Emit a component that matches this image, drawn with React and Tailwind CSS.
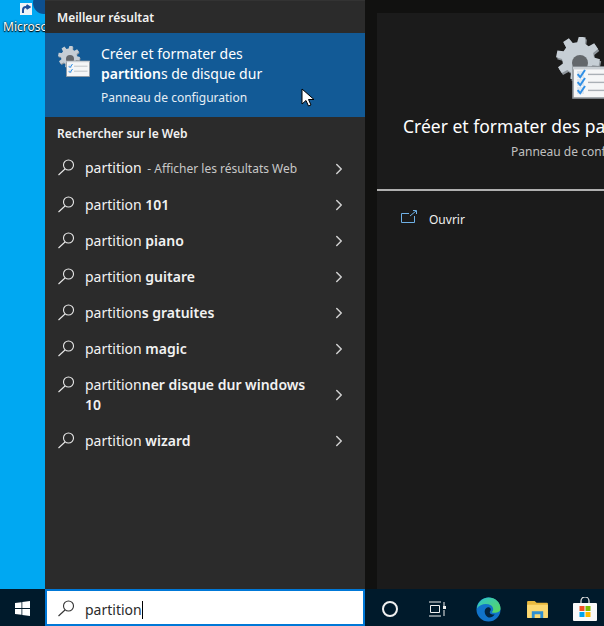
import { ChevronRight } from 'lucide-react'

const font = { fontFamily: '"Noto Sans", sans-serif' }

// 8 tooth gear outline, coordinates in the icon's 32x32 box
function gearPath(cx, cy, outer, inner) {
  const pts = []
  for (let i = 0; i < 8; i++) {
    const a = (i * Math.PI) / 4 + 0.2
    const step = Math.PI / 4
    const at = (r, t) => `${(cx + r * Math.cos(t)).toFixed(2)} ${(cy + r * Math.sin(t)).toFixed(2)}`
    pts.push(at(inner, a - step * 0.32), at(outer, a - step * 0.2), at(outer, a + step * 0.2), at(inner, a + step * 0.32))
  }
  return `M${pts.join('L')}Z`
}

function SearchIcon({ className = 'text-[#e8e8e8]' }) {
  return (
    <svg width="19" height="19" viewBox="0 0 19 19" fill="none" stroke="currentColor" strokeWidth="1.1" className={className}>
      <circle cx="11.5" cy="7" r="5" />
      <path d="M8 11 L1.5 17" />
    </svg>
  )
}

function Check({ y }) {
  return (
    <g>
      <rect x="10.500" y={y} width="3.500" height="3.500" fill="#dfe6ee" />
      <path d={`M10.800 ${y + 1.6}l1.300 1.500 2.400-3.600`} fill="none" stroke="#2f8fe6" strokeWidth="1" />
      <path d={`M16 ${y + 1.7}h13.500`} stroke="#aab0b6" strokeWidth="0.7" />
    </g>
  )
}

function GearIcon({ size, rows }) {
  const ys = rows === 3 ? [17, 21, 25] : [18.5, 23.5]
  return (
    <svg width={size} height={size} viewBox="0 0 32 32">
      <path d={gearPath(11.6, 11.6, 11, 8)} fill="#8e959b" />
      <path d={gearPath(11, 10.6, 11, 8)} fill="#c6ced5" />
      <circle cx="12" cy="13" r="4" fill="#63676b" />
      <rect x="8.500" y="15" width="23" height="15.500" fill="#f5f6f7" stroke="#90969c" strokeWidth="0.8" />
      <rect x="8.500" y="15" width="23" height="1.200" fill="#c9ced3" />
      {ys.map((y) => (
        <Check key={y} y={y} />
      ))}
    </svg>
  )
}

function WebRow({ children }) {
  return (
    <div className="flex items-center pl-[12px] pr-[17px] py-[8px]">
      <div className="w-[28px] shrink-0 self-start">
        <SearchIcon />
      </div>
      <div className="flex-1 text-[14px] leading-[20px] text-[#f2f2f2]">
        <div className="max-w-[226px]">{children}</div>
      </div>
      <ChevronRight size={18} strokeWidth={2} className="text-[#d0d0d0] shrink-0" />
    </div>
  )
}

function TaskIcons() {
  return (
    <div className="flex items-center flex-1 h-full pt-[3px]">
      <div className="w-[49px] flex justify-center">
        <div className="w-[16px] h-[16px] rounded-full border-2 border-[#f0f0f0]" />
      </div>
      <div className="w-[45px] flex justify-center">
        <svg width="18" height="16" viewBox="0 0 18 16" fill="none" stroke="#f0f0f0" strokeWidth="1">
          <path d="M1 1h12M1 15h12M2.500 4.500h9v7h-9zM16 1v4M16 9v6" />
          <rect x="15" y="5" width="3" height="3" fill="#f0f0f0" stroke="none" />
        </svg>
      </div>
      <div className="w-[58px] flex justify-center">
        <svg width="25" height="25" viewBox="0 0 26 26">
          <defs>
            <linearGradient id="edgeA" x1="0" y1="0" x2="1" y2="1">
              <stop offset="0" stopColor="#2ec4d0" />
              <stop offset="1" stopColor="#5ad85a" />
            </linearGradient>
          </defs>
          <circle cx="13" cy="13" r="12.500" fill="#1173c9" />
          <path d="M1 12C2 4 8 .5 13 .5c7 0 12.500 5 12.500 11.500 0 3-3 4.500-6 4.500-2 0-3-.5-3-1 2-1 2-5-1-7C11 6 4 7 1 12z" fill="url(#edgeA)" />
          <path d="M9 15c0-3 3-5 5-4 2 1 1.500 3 .5 4-1 2 2 4 5 3-2 3-5 4-7 3-2-1-3.500-3.500-3.500-6z" fill="#03243f" />
        </svg>
      </div>
      <div className="w-[40px] flex justify-center">
        <svg width="21" height="18" viewBox="0 0 22 19">
          <path d="M0 2a1 1 0 0 1 1-1h7l2 2h11a1 1 0 0 1 1 1v14a1 1 0 0 1-1 1H1a1 1 0 0 1-1-1z" fill="#e8b93f" />
          <path d="M0 5h22v13a1 1 0 0 1-1 1H1a1 1 0 0 1-1-1z" fill="#fbd871" />
          <path d="M5 12h12v7h-3v-4H8v4H5z" fill="#2f8fd0" />
        </svg>
      </div>
      <div className="w-[56px] flex justify-center">
        <svg width="24" height="24" viewBox="0 0 24 24">
          <path d="M8 6V4a4 4 0 0 1 8 0v2" fill="none" stroke="#e8e8e8" strokeWidth="1.200" />
          <rect x="0" y="6" width="24" height="18" rx="1" fill="#fafafa" />
          <rect x="6.500" y="9" width="5" height="5" fill="#f25022" />
          <rect x="12.500" y="9" width="5" height="5" fill="#7fba00" />
          <rect x="6.500" y="15" width="5" height="5" fill="#00a4ef" />
          <rect x="12.500" y="15" width="5" height="5" fill="#ffb900" />
        </svg>
      </div>
    </div>
  )
}

export default function App() {
  return (
    <div className="w-[604px] h-[626px] flex flex-col overflow-hidden bg-[#001a2b]" style={font}>
      <div className="flex flex-1 min-h-0">
        {/* desktop wallpaper strip */}
        <div className="w-[45px] shrink-0 relative overflow-hidden bg-[#00a8f2]">
          <div className="absolute left-[33px] -top-[8px] w-[24px] h-[22px] rounded-full bg-[#0d4f8f]" />
          <div className="absolute left-[20px] top-[3px] w-[12px] h-[12px] bg-[#eef3f8] flex items-center justify-center">
            <svg width="10" height="10" viewBox="0 0 10 10" fill="none" stroke="#1f4f9c" strokeWidth="2">
              <path d="M2 9V6a3 3 0 0 1 3-3h3M5.500 1l3 2-3 2" />
            </svg>
          </div>
          <div className="absolute left-[3px] top-[20px] text-[12px] leading-[14px] text-white whitespace-nowrap [text-shadow:0_0_2px_#000,0_1px_1px_#000]">Microsoft</div>
        </div>

        {/* results column */}
        <div className="w-[320px] shrink-0 bg-[#2b2b2b] border-t border-[#333] flex flex-col">
          <div className="h-[32px] flex items-center pl-[12px] pt-[1px] text-[12px] font-semibold text-[#f2f2f2]">Meilleur résultat</div>
          <div className="relative h-[84px] bg-[#125a96] flex">
            <div className="w-[56px] shrink-0 pl-[13px] pt-[13px]">
              <GearIcon size={32} rows={2} />
            </div>
            <div className="pt-[11px] text-white">
              <div className="text-[14px] leading-[20px]">Créer et formater des</div>
              <div className="text-[14px] leading-[20px]"><span className="font-semibold">partition</span>s de disque dur</div>
              <div className="text-[12px] leading-[16px] mt-[6px] text-[#e6eef5]">Panneau de configuration</div>
            </div>
            {/* mouse pointer */}
            <svg width="14" height="20" viewBox="0 0 14 20" className="absolute left-[256px] top-[55px]">
              <path d="M1 1v15l4-3.500 2.500 5.500 2.500-1-2.500-5.500H13z" fill="#fff" stroke="#000" strokeWidth="1" />
            </svg>
          </div>
          <div className="h-[33px] flex items-center pl-[12px] text-[12px] font-semibold text-[#f2f2f2]">Rechercher sur le Web</div>
          <WebRow>partition <span className="ml-[2px] text-[12px] text-[#c8c8c8]">- Afficher les résultats Web</span></WebRow>
          <WebRow>partition <b className="font-semibold">101</b></WebRow>
          <WebRow>partition <b className="font-semibold">piano</b></WebRow>
          <WebRow>partition <b className="font-semibold">guitare</b></WebRow>
          <WebRow>partition<b className="font-semibold">s gratuites</b></WebRow>
          <WebRow>partition <b className="font-semibold">magic</b></WebRow>
          <WebRow>partition<b className="font-semibold">ner disque dur windows 10</b></WebRow>
          <WebRow>partition <b className="font-semibold">wizard</b></WebRow>
        </div>

        {/* preview column */}
        <div className="flex-1 bg-[#111110] pl-[12px] pt-[13px] overflow-hidden">
          <div className="h-full w-[300px] bg-[#1b1b1b] flex flex-col">
            <div className="h-[178px] border-b-2 border-[#b0b0b0] flex flex-col relative">
              <div className="absolute left-[179px] top-[24px]">
                <GearIcon size={64} rows={3} />
              </div>
              <div className="pl-[26px] pt-[101px] text-[17.5px] leading-[24px] text-white whitespace-nowrap">Créer et formater des partitions de disque dur</div>
              <div className="pl-[134px] pt-[6px] text-[12px] leading-[16px] text-[#c0c0c0] whitespace-nowrap">Panneau de configuration</div>
            </div>
            <div className="flex items-center pl-[24px] pt-[19px]">
              <svg width="16" height="13" viewBox="0 0 16 13" fill="none" stroke="#6fb1e6" strokeWidth="1" className="mb-[6px]">
                <path d="M8 3.500H.5v9h13V6M9 6l6-5M12 .5h3.500V4" />
              </svg>
              <span className="ml-[12px] text-[12px] text-[#f0f0f0]">Ouvrir</span>
            </div>
          </div>
        </div>
      </div>

      {/* taskbar */}
      <div className="h-[37px] shrink-0 flex bg-[#001a2b]">
        <div className="w-[45px] shrink-0 flex items-center justify-center pt-[2px]">
          <svg width="15" height="15" viewBox="0 0 15 15" fill="#fff">
            <path d="M0 2.100l6.500-.9v5.900H0zM7.300 1.100L15 0v7.100H7.300zM0 7.900h6.500v5.900L0 12.900zM7.300 7.900H15V15l-7.700-1.100z" />
          </svg>
        </div>
        <div className="w-[320px] shrink-0 bg-white border-2 border-[#0078d7] flex items-center pl-[10px] pt-[2px]">
          <SearchIcon className="text-[#333]" />
          <span className="ml-[9px] pt-[2px] text-[14px] text-[#2b2b2b]">partition</span>
          <span className="w-px h-[18px] bg-black mt-[2px]" />
        </div>
        <TaskIcons />
      </div>
    </div>
  )
}
